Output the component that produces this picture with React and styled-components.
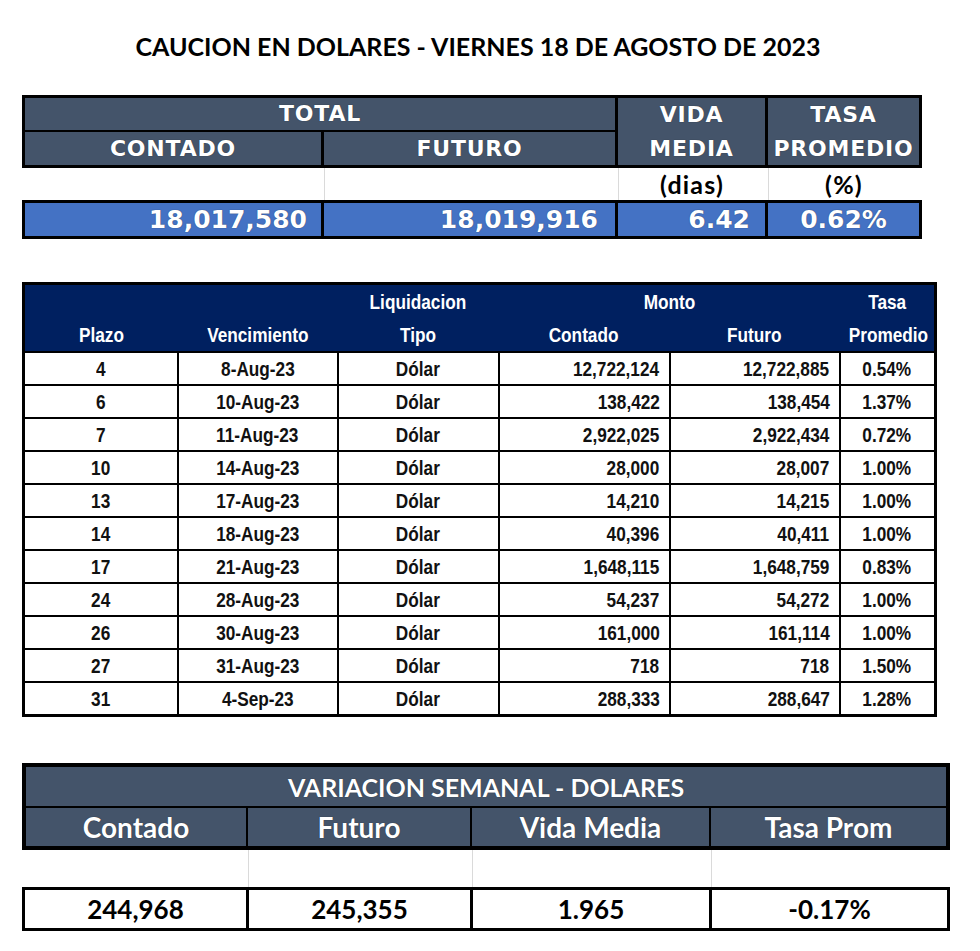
import styled, { createGlobalStyle } from "styled-components";

const GlobalStyle = createGlobalStyle`
  body {
    margin: 0;
    background: #ffffff;
  }
`;

const summaryCols = "296px 291px 147px 151px";

const weekly = {
  contado: "244,968",
  futuro: "245,355",
  vida: "1.965",
  tasa: "-0.17%",
};

const rows = [
  ["4", "8-Aug-23", "12,722,124", "12,722,885", "0.54%"],
  ["6", "10-Aug-23", "138,422", "138,454", "1.37%"],
  ["7", "11-Aug-23", "2,922,025", "2,922,434", "0.72%"],
  ["10", "14-Aug-23", "28,000", "28,007", "1.00%"],
  ["13", "17-Aug-23", "14,210", "14,215", "1.00%"],
  ["14", "18-Aug-23", "40,396", "40,411", "1.00%"],
  ["17", "21-Aug-23", "1,648,115", "1,648,759", "0.83%"],
  ["24", "28-Aug-23", "54,237", "54,272", "1.00%"],
  ["26", "30-Aug-23", "161,000", "161,114", "1.00%"],
  ["27", "31-Aug-23", "718", "718", "1.50%"],
  ["31", "4-Sep-23", "288,333", "288,647", "1.28%"],
];

// Arial Narrow look: Liberation Sans squeezed to 82%
const Narrow = ({ children, right }) => <NarrowText $right={right}>{children}</NarrowText>;

function App() {
  return (
    <Page>
      <GlobalStyle />
      <Title>CAUCION EN DOLARES - VIERNES 18 DE AGOSTO DE 2023</Title>

      <SummaryHead $cols={summaryCols}>
        <SlateCell style={{ gridColumn: "1 / 3" }}>TOTAL</SlateCell>
        <SlateCell style={{ gridColumn: "3", gridRow: "1 / 3" }}>
          VIDA<br />MEDIA
        </SlateCell>
        <SlateCell style={{ gridColumn: "4", gridRow: "1 / 3" }}>
          TASA<br />PROMEDIO
        </SlateCell>
        <SlateCell>CONTADO</SlateCell>
        <SlateCell>FUTURO</SlateCell>
      </SummaryHead>
      <UnitsRow $cols={summaryCols}>
        <UnitCell />
        <UnitCell />
        <UnitCell>(dias)</UnitCell>
        <UnitCell>(%)</UnitCell>
      </UnitsRow>
      <SummaryValues $cols={summaryCols}>
        <BlueCell $align="right" $pad="14px">18,017,580</BlueCell>
        <BlueCell $align="right" $pad="17px">18,019,916</BlueCell>
        <BlueCell $align="right" $pad="15px">6.42</BlueCell>
        <BlueCell $align="center">0.62%</BlueCell>
      </SummaryValues>

      <DetailTable>
        <colgroup>
          <col style={{ width: 154 }} />
          <col style={{ width: 160 }} />
          <col style={{ width: 161 }} />
          <col style={{ width: 171 }} />
          <col style={{ width: 170 }} />
          <col style={{ width: 96 }} />
        </colgroup>
        <thead>
          <tr>
            <HeadTh />
            <HeadTh />
            <HeadTh><Narrow>Liquidacion</Narrow></HeadTh>
            <HeadTh colSpan={2}><Narrow>Monto</Narrow></HeadTh>
            <HeadTh><Narrow>Tasa</Narrow></HeadTh>
          </tr>
          <tr>
            <HeadTh><Narrow>Plazo</Narrow></HeadTh>
            <HeadTh><Narrow>Vencimiento</Narrow></HeadTh>
            <HeadTh><Narrow>Tipo</Narrow></HeadTh>
            <HeadTh><Narrow>Contado</Narrow></HeadTh>
            <HeadTh><Narrow>Futuro</Narrow></HeadTh>
            <HeadTh><Narrow>Promedio</Narrow></HeadTh>
          </tr>
        </thead>
        <tbody>
          {rows.map((r) => (
            <tr key={r[0]}>
              <DataTd><Narrow>{r[0]}</Narrow></DataTd>
              <DataTd><Narrow>{r[1]}</Narrow></DataTd>
              <DataTd><Narrow>Dólar</Narrow></DataTd>
              <DataTd $align="right"><Narrow right>{r[2]}</Narrow></DataTd>
              <DataTd $align="right"><Narrow right>{r[3]}</Narrow></DataTd>
              <DataTd><Narrow>{r[4]}</Narrow></DataTd>
            </tr>
          ))}
        </tbody>
      </DetailTable>

      <WeeklyHead>
        <WeeklyTitle>VARIACION SEMANAL - DOLARES</WeeklyTitle>
        <WeeklyLabel>Contado</WeeklyLabel>
        <WeeklyLabel>Futuro</WeeklyLabel>
        <WeeklyLabel>Vida Media</WeeklyLabel>
        <WeeklyLabel>Tasa Prom</WeeklyLabel>
      </WeeklyHead>
      <WeeklyGap>
        <GapCell />
        <GapCell />
        <GapCell />
        <GapCell />
      </WeeklyGap>
      <WeeklyValues>
        <WeeklyValue>{weekly.contado}</WeeklyValue>
        <WeeklyValue>{weekly.futuro}</WeeklyValue>
        <WeeklyValue>{weekly.vida}</WeeklyValue>
        <WeeklyValue>{weekly.tasa}</WeeklyValue>
      </WeeklyValues>
    </Page>
  );
}

const Page = styled.div`
  width: 980px;
  box-sizing: border-box;
  padding: 29px 0 20px 22px;
  display: flex;
  flex-direction: column;
  align-items: flex-start;
`;

const Title = styled.h1`
  width: 912px;
  margin: 0 0 32px 0;
  text-align: center;
  font-family: Lato, "Liberation Sans", sans-serif;
  font-weight: 700;
  font-size: 25px;
  line-height: 34px;
  color: #000;
`;

const SummaryHead = styled.div`
  display: grid;
  grid-template-columns: ${(p) => p.$cols};
  grid-template-rows: 32px 33px;
  column-gap: 3px;
  row-gap: 2px;
  border: 3px solid #000;
  background: #000;
`;

const SlateCell = styled.div`
  background: #44546a;
  color: #fff;
  display: flex;
  align-items: center;
  justify-content: center;
  text-align: center;
  font-family: "DejaVu Sans", Verdana, sans-serif;
  font-weight: 700;
  font-size: 22px;
  letter-spacing: 0.8px;
  line-height: 34px;
  text-shadow: 0 0 1px rgba(0, 0, 0, 0.6);
`;

const UnitsRow = styled.div`
  display: grid;
  grid-template-columns: ${(p) => p.$cols};
  column-gap: 3px;
  padding: 0 3px;
  height: 32px;
`;

const UnitCell = styled.div`
  display: flex;
  align-items: center;
  justify-content: center;
  font-family: Lato, "Liberation Sans", sans-serif;
  font-weight: 700;
  font-size: 25px;
  letter-spacing: 1.2px;
  color: #000;
  & + & {
    border-left: 1px solid #dadada;
  }
`;

const SummaryValues = styled.div`
  display: grid;
  grid-template-columns: ${(p) => p.$cols};
  grid-template-rows: 33px;
  column-gap: 3px;
  border: 3px solid #000;
  background: #000;
`;

const BlueCell = styled.div`
  background: #4472c4;
  color: #fff;
  display: flex;
  align-items: center;
  justify-content: ${(p) => (p.$align === "right" ? "flex-end" : "center")};
  padding-right: ${(p) => p.$pad || "0"};
  font-family: "DejaVu Sans", Verdana, sans-serif;
  font-weight: 700;
  font-size: 25px;
  text-shadow: 0 0 1px rgba(0, 0, 0, 0.6);
`;

const DetailTable = styled.table`
  margin-top: 43px;
  width: 912px;
  table-layout: fixed;
  border-collapse: collapse;
  border: 3px solid #000;
  font-family: "Liberation Sans", Arial, sans-serif;
  font-weight: 700;
  font-size: 21px;
`;

const NarrowText = styled.span`
  display: inline-block;
  white-space: nowrap;
  transform: scaleX(0.82);
  transform-origin: ${(p) => (p.$right ? "right" : "center")} center;
`;

const HeadTh = styled.th`
  background: #002060;
  color: #fff;
  height: 33px;
  padding: 0;
  font-weight: 700;
  text-align: center;
  vertical-align: middle;
  border: none;
  overflow: visible;
`;

const DataTd = styled.td`
  height: 31px;
  padding: 0 ${(p) => (p.$align === "right" ? "9px" : "0")} 0 0;
  border: 2px solid #000;
  text-align: ${(p) => p.$align || "center"};
  vertical-align: middle;
  color: #111;
`;

const weeklyCols = "220px 222px 237px 235px";

const WeeklyHead = styled.div`
  margin-top: 46px;
  width: 928px;
  box-sizing: border-box;
  display: grid;
  grid-template-columns: ${weeklyCols};
  grid-template-rows: 39px 38px;
  column-gap: 2px;
  row-gap: 2px;
  border: 4px solid #000;
  background: #000;
`;

const WeeklyCellBase = styled.div`
  display: flex;
  align-items: center;
  justify-content: center;
  font-family: Lato, "Liberation Sans", sans-serif;
  font-weight: 700;
  font-size: ${(p) => p.$size || "26px"};
`;

const WeeklyTitle = styled(WeeklyCellBase)`
  grid-column: 1 / 5;
  background: #44546a;
  color: #fff;
  font-size: 25px;
  text-shadow: 0 0 1px rgba(0, 0, 0, 0.6);
`;

const WeeklyLabel = styled(WeeklyCellBase)`
  background: #44546a;
  color: #fff;
  font-size: 28px;
  text-shadow: 0 0 1px rgba(0, 0, 0, 0.6);
`;

const WeeklyGap = styled.div`
  width: 928px;
  height: 37px;
  box-sizing: border-box;
  padding: 0 4px;
  display: grid;
  grid-template-columns: ${weeklyCols};
  column-gap: 2px;
`;

const GapCell = styled.div`
  & + & {
    border-left: 1px solid #dadada;
  }
`;

const WeeklyValues = styled.div`
  width: 928px;
  box-sizing: border-box;
  display: grid;
  grid-template-columns: 221px 221px 236px 235px;
  grid-template-rows: 38px;
  column-gap: 3px;
  border: 3px solid #000;
  background: #000;
`;

const WeeklyValue = styled(WeeklyCellBase)`
  background: #fff;
  color: #000;
`;

export default App;
